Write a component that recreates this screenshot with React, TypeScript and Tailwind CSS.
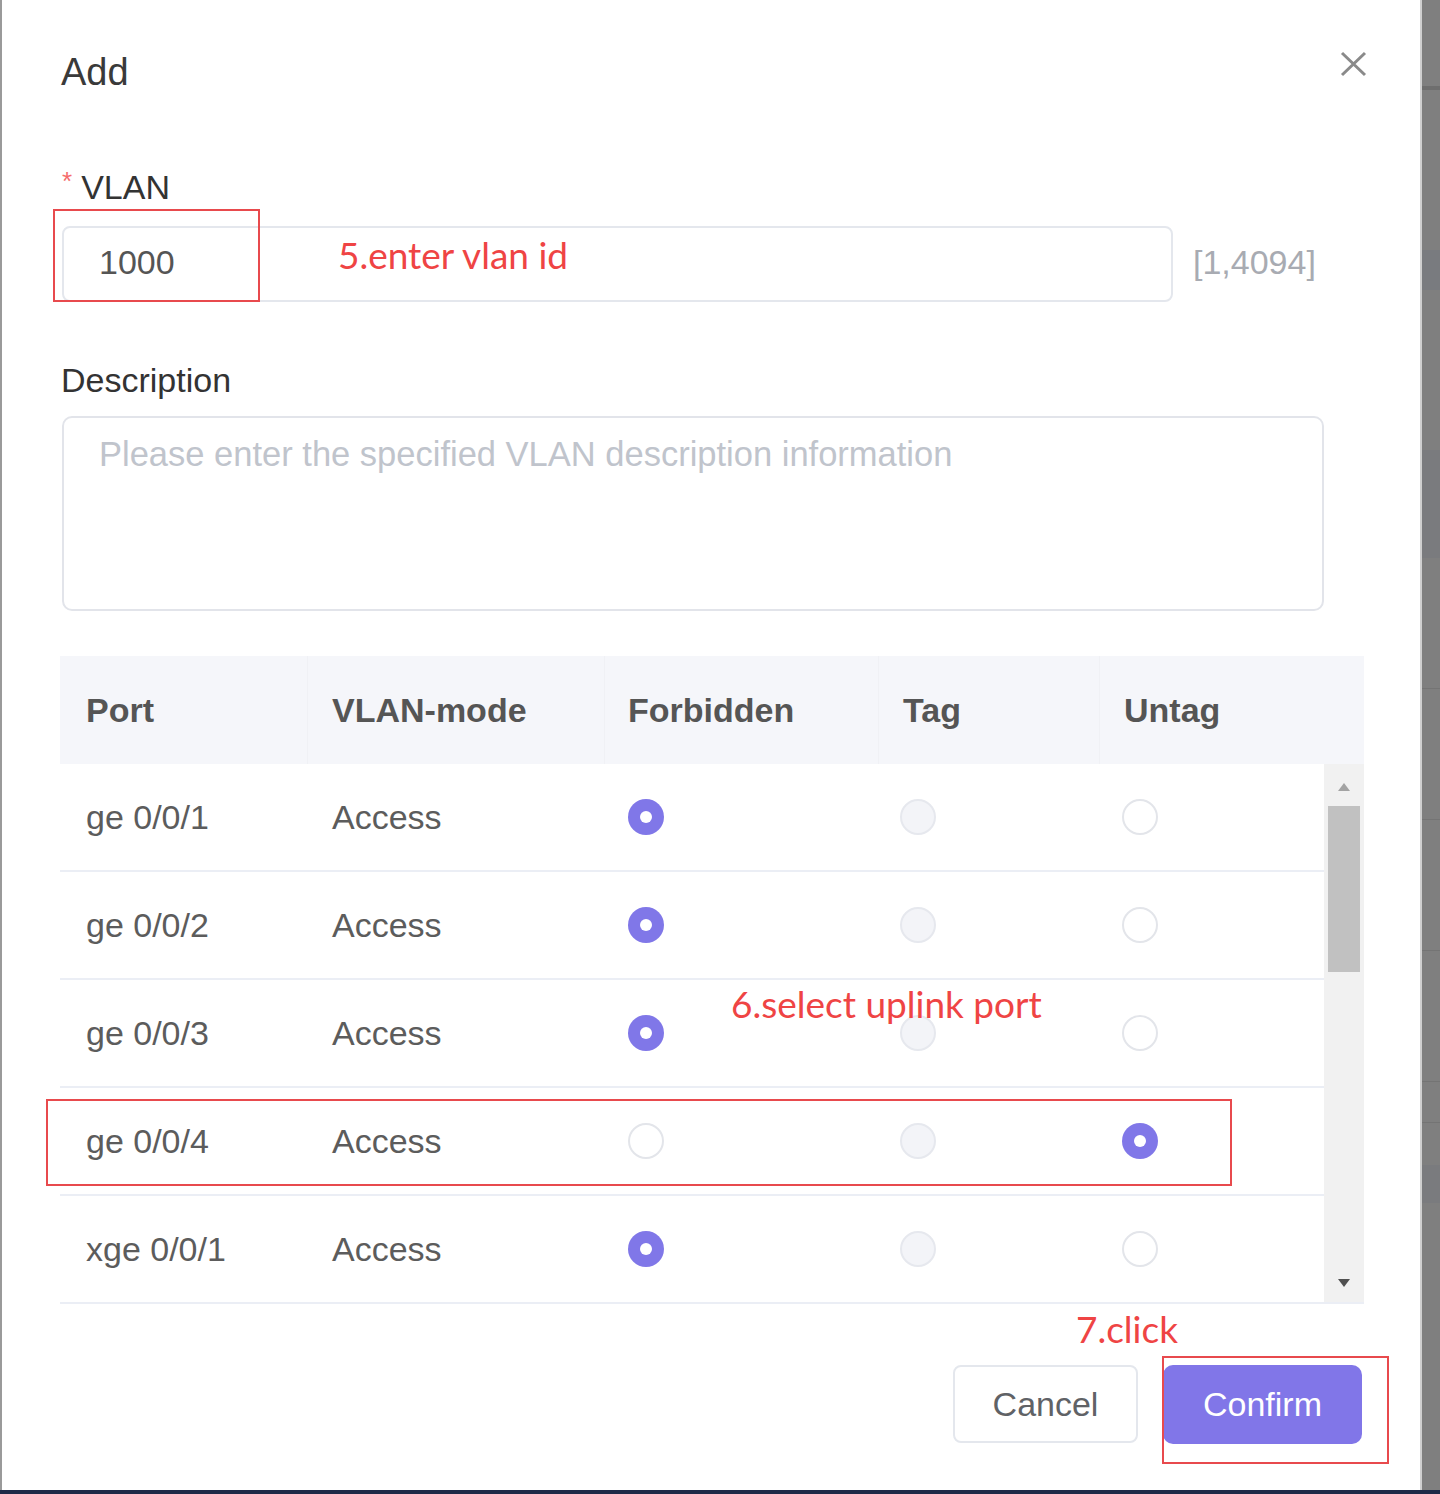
import React from "react";

type RState = "on" | "off" | "dis";

const rows: { port: string; f: RState; t: RState; u: RState }[] = [
  { port: "ge 0/0/1", f: "on", t: "dis", u: "off" },
  { port: "ge 0/0/2", f: "on", t: "dis", u: "off" },
  { port: "ge 0/0/3", f: "on", t: "dis", u: "off" },
  { port: "ge 0/0/4", f: "off", t: "dis", u: "on" },
  { port: "xge 0/0/1", f: "on", t: "dis", u: "off" },
];

function Radio({ s }: { s: RState }) {
  if (s === "on")
    return (
      <div className="w-[36px] h-[36px] rounded-full bg-[#8077e8] flex items-center justify-center">
        <div className="w-[12px] h-[12px] rounded-full bg-white" />
      </div>
    );
  if (s === "dis")
    return <div className="w-[36px] h-[36px] rounded-full bg-[#f3f4f8] border-2 border-[#e6e8ee]" />;
  return <div className="w-[36px] h-[36px] rounded-full bg-white border-2 border-[#e3e5ea]" />;
}

const ann = "font-['Lato','Liberation_Sans',sans-serif] text-[37px] leading-none text-[#ef4444]";

export default function App() {
  return (
    <div className="relative w-[1440px] h-[1494px] flex flex-col font-['Liberation_Sans',Arial,sans-serif] overflow-hidden">
      <div className="flex h-[1490px]">
        <div className="w-[2px] bg-[#9a9a9a]" />
        <div className="w-[1418px] bg-white flex flex-col">
          {/* title */}
          <div className="h-[170px] flex items-start justify-between pl-[59px] pr-[53px]">
            <div className="mt-[53px] text-[38px] leading-[38px] text-[#3a3a3a]">Add</div>
            <svg className="mt-[51px]" width="27" height="26" viewBox="0 0 27 26">
              <path d="M2 2 L25 24 M25 2 L2 24" stroke="#8a8a8a" strokeWidth="3" fill="none" />
            </svg>
          </div>
          {/* VLAN label */}
          <div className="h-[34px] pl-[60px] flex items-center text-[34px] leading-none text-[#333]">
            <span className="text-[#f56c6c] text-[26px] mr-[9px] self-start mt-[-2px]">*</span>
            <span>VLAN</span>
          </div>
          {/* VLAN input */}
          <div className="mt-[22px] pl-[60px] flex items-center">
            <div className="w-[1111px] h-[76px] border-2 border-[#e4e7ed] rounded-[8px] flex items-center pl-[35px] pb-[3px] text-[34px] text-[#555]">
              1000
            </div>
            <div className="ml-[20px] pb-[3px] text-[34px] text-[#a8abb2]">[1,4094]</div>
          </div>
          {/* Description */}
          <div className="mt-[61px] h-[34px] pl-[59px] flex items-center text-[34px] leading-none text-[#333]">
            Description
          </div>
          <div className="mt-[19px] ml-[60px] w-[1262px] h-[195px] border-2 border-[#e2e4ea] rounded-[10px] pl-[35px] pt-[16px] text-[34.5px] leading-[40px] text-[#c0c4cc]">
            Please enter the specified VLAN description information
          </div>
          {/* Table */}
          <div className="mt-[45px] ml-[58px] w-[1304px] flex flex-col border-b-2 border-[#ebeef5]">
            <div className="h-[108px] bg-[#f5f6fa] grid grid-cols-[248px_297px_274px_221px_264px] text-[34px] font-bold text-[#555]">
              <div className="flex items-center pl-[26px] border-r border-[#f0f1f5]">Port</div>
              <div className="flex items-center pl-[24px] border-r border-[#f0f1f5]">VLAN-mode</div>
              <div className="flex items-center pl-[23px] border-r border-[#f0f1f5]">Forbidden</div>
              <div className="flex items-center pl-[24px] border-r border-[#f0f1f5]">Tag</div>
              <div className="flex items-center pl-[24px]">Untag</div>
            </div>
            <div className="flex">
              <div className="w-[1264px] flex flex-col">
                {rows.map((r, i) => (
                  <div
                    key={r.port}
                    className={
                      "grid grid-cols-[248px_297px_274px_221px_224px] text-[34px] text-[#5c5c5c] " +
                      (i < rows.length - 1 ? "h-[108px] border-b-2 border-[#ebeef5]" : "h-[106px]")
                    }
                  >
                    <div className="flex items-center pl-[26px]">{r.port}</div>
                    <div className="flex items-center pl-[24px]">Access</div>
                    <div className="flex items-center pl-[23px]"><Radio s={r.f} /></div>
                    <div className="flex items-center pl-[21px]"><Radio s={r.t} /></div>
                    <div className="flex items-center pl-[22px]"><Radio s={r.u} /></div>
                  </div>
                ))}
              </div>
              <div className="w-[40px] bg-[#f1f1f1] flex flex-col items-center">
                <svg className="mt-[18px]" width="14" height="10" viewBox="0 0 14 10">
                  <path d="M7 1 L13 9 L1 9 Z" fill="#a3a3a3" />
                </svg>
                <div className="mt-[14px] w-[32px] h-[166px] bg-[#c1c1c1]" />
                <div className="flex-1" />
                <svg className="mb-[14px]" width="14" height="10" viewBox="0 0 14 10">
                  <path d="M1 1 L13 1 L7 9 Z" fill="#505050" />
                </svg>
              </div>
            </div>
          </div>
          {/* buttons */}
          <div className="mt-[61px] flex justify-end pr-[58px] gap-[25px]">
            <div className="w-[185px] h-[78px] border-2 border-[#e4e7ed] rounded-[8px] flex items-center justify-center text-[34px] text-[#606266]">
              Cancel
            </div>
            <div className="w-[199px] h-[79px] bg-[#8176e8] rounded-[10px] flex items-center justify-center text-[34px] text-white">
              Confirm
            </div>
          </div>
        </div>
        <div className="w-[2px] bg-[#cfcfcf]" />
        <div className="flex-1 bg-[#7f7f7f] flex flex-col">
          <div className="mt-[86px] h-[4px] bg-[#6e6e6e]" />
          <div className="mt-[160px] h-[40px] bg-[#797b7f]" />
          <div className="mt-[160px] h-[108px] bg-[#7a7b7e]" />
          <div className="mt-[130px] h-[1px] bg-[#747474]" />
          <div className="mt-[130px] h-[1px] bg-[#747474]" />
          <div className="mt-[130px] h-[1px] bg-[#747474]" />
          <div className="mt-[130px] h-[1px] bg-[#747474]" />
          <div className="mt-[40px] h-[1px] bg-[#747474]" />
          <div className="mt-[42px] h-[38px] bg-[#7a7b7e]" />
        </div>
      </div>
      <div className="h-[4px] bg-[#1e2a48]" />

      {/* annotations */}
      <div className="absolute left-[53px] top-[209px] w-[207px] h-[93px] border-2 border-[#e84a4d]" />
      <div className={"absolute left-[338px] top-[236px] " + ann}>5.enter vlan id</div>
      <div className={"absolute left-[731px] top-[985px] " + ann}>6.select uplink port</div>
      <div className="absolute left-[46px] top-[1099px] w-[1186px] h-[87px] border-2 border-[#e84a4d]" />
      <div className={"absolute left-[1076px] top-[1310px] " + ann}>7.click</div>
      <div className="absolute left-[1162px] top-[1356px] w-[227px] h-[108px] border-2 border-[#e84a4d]" />
    </div>
  );
}
